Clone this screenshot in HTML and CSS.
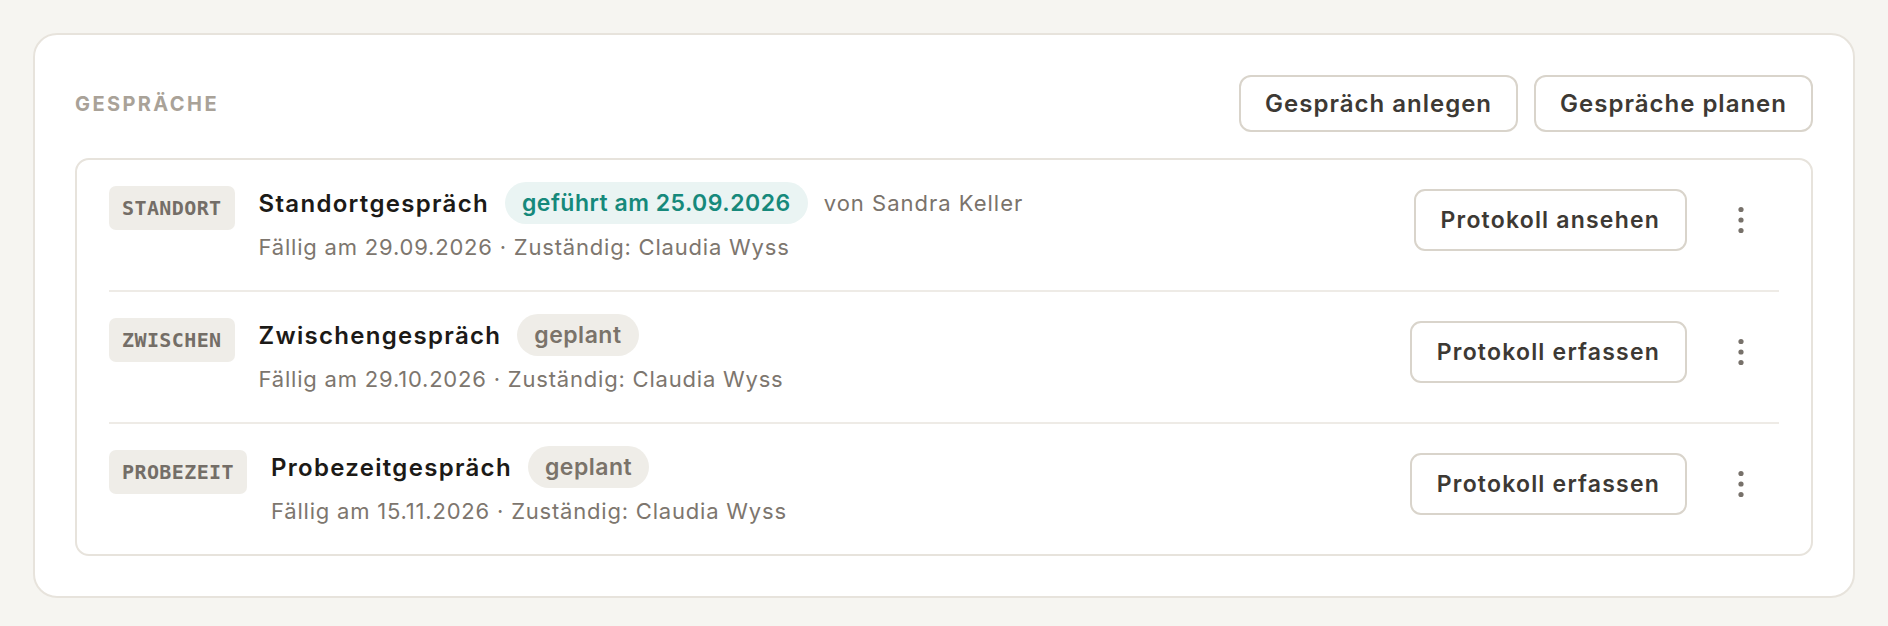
FILE: index.html
```html
<!DOCTYPE html>
<html lang="de">
<head>
<meta charset="utf-8">
<title>Gespräche</title>
<link rel="stylesheet" href="styles.css">
</head>
<body>
<section class="card">
  <header class="card-head">
    <h2 class="label">GESPRÄCHE</h2>
    <div class="head-actions">
      <button class="btn btn-head">Gespräch anlegen</button>
      <button class="btn btn-head">Gespräche planen</button>
    </div>
  </header>
  <div class="list">
    <div class="row">
      <div class="row-main">
        <span class="tag">STANDORT</span>
        <div class="info">
          <div class="title-line">
            <span class="title">Standortgespräch</span>
            <span class="pill pill-done">geführt am 25.09.2026</span>
            <span class="by">von Sandra Keller</span>
          </div>
          <div class="meta">Fällig am 29.09.2026 · Zuständig: Claudia Wyss</div>
        </div>
      </div>
      <div class="row-actions">
        <button class="btn btn-row">Protokoll ansehen</button>
        <button class="kebab" aria-label="Mehr"><svg width="6" height="28" viewBox="0 0 6 28"><circle cx="3" cy="3.5" r="2.6"/><circle cx="3" cy="14" r="2.6"/><circle cx="3" cy="24.5" r="2.6"/></svg></button>
      </div>
    </div>
    <div class="row">
      <div class="row-main">
        <span class="tag">ZWISCHEN</span>
        <div class="info">
          <div class="title-line">
            <span class="title">Zwischengespräch</span>
            <span class="pill pill-plan">geplant</span>
          </div>
          <div class="meta">Fällig am 29.10.2026 · Zuständig: Claudia Wyss</div>
        </div>
      </div>
      <div class="row-actions">
        <button class="btn btn-row">Protokoll erfassen</button>
        <button class="kebab" aria-label="Mehr"><svg width="6" height="28" viewBox="0 0 6 28"><circle cx="3" cy="3.5" r="2.6"/><circle cx="3" cy="14" r="2.6"/><circle cx="3" cy="24.5" r="2.6"/></svg></button>
      </div>
    </div>
    <div class="row">
      <div class="row-main">
        <span class="tag">PROBEZEIT</span>
        <div class="info">
          <div class="title-line">
            <span class="title">Probezeitgespräch</span>
            <span class="pill pill-plan">geplant</span>
          </div>
          <div class="meta">Fällig am 15.11.2026 · Zuständig: Claudia Wyss</div>
        </div>
      </div>
      <div class="row-actions">
        <button class="btn btn-row">Protokoll erfassen</button>
        <button class="kebab" aria-label="Mehr"><svg width="6" height="28" viewBox="0 0 6 28"><circle cx="3" cy="3.5" r="2.6"/><circle cx="3" cy="14" r="2.6"/><circle cx="3" cy="24.5" r="2.6"/></svg></button>
      </div>
    </div>
  </div>
</section>
</body>
</html>
```
FILE: styles.css
```css
* { box-sizing: border-box; }

html, body {
  margin: 0;
  background: #f6f5f1;
}

body {
  padding: 33px;
  font-family: Inter, "Noto Sans", "Liberation Sans", sans-serif;
  color: #1c1a17;
}

.card {
  background: #ffffff;
  border: 2px solid #e7e3dc;
  border-radius: 24px;
  padding: 40px;
}

.card-head {
  display: flex;
  align-items: center;
  justify-content: space-between;
  margin-bottom: 26px;
}

.label {
  margin: 0;
  font-size: 20px;
  font-weight: 700;
  letter-spacing: 0.12em;
  color: #a9a298;
}

.head-actions {
  display: flex;
  gap: 16px;
}

.btn {
  font-family: inherit;
  background: #ffffff;
  border: 2px solid #d9d4cb;
  color: #3d3934;
  font-weight: 600;
  cursor: pointer;
}

.btn-head {
  height: 57px;
  padding: 0 24px;
  border-radius: 12px;
  font-size: 24px;
  letter-spacing: 1px;
}

.list {
  border: 2px solid #e7e3dc;
  border-radius: 14px;
  padding: 0 32px;
}

.row {
  display: flex;
  align-items: flex-start;
  justify-content: space-between;
  padding: 22px 18px 28px 0;
  border-bottom: 2px solid #eeebe6;
}

.row:last-child {
  border-bottom: none;
}

.row-main {
  display: flex;
  align-items: flex-start;
  gap: 24px;
}

.tag {
  margin-top: 4px;
  height: 44px;
  padding: 0 13px;
  display: inline-flex;
  align-items: center;
  background: #efede8;
  border-radius: 7px;
  font-family: "DejaVu Sans Mono", "Liberation Mono", monospace;
  font-size: 20px;
  font-weight: 700;
  letter-spacing: 0.4px;
  color: #746e67;
}

.info {
  display: flex;
  flex-direction: column;
  gap: 8px;
}

.title-line {
  display: flex;
  align-items: center;
  gap: 16px;
  height: 42px;
}

.title {
  font-size: 24px;
  font-weight: 600;
  letter-spacing: 1.3px;
  color: #1c1a17;
}

.pill {
  height: 42px;
  padding: 0 17px;
  display: inline-flex;
  align-items: center;
  border-radius: 21px;
  font-size: 23px;
  font-weight: 600;
  letter-spacing: 0.5px;
}

.pill-done {
  background: #eaf4f3;
  color: #16897b;
}

.pill-plan {
  background: #efede8;
  color: #7a736a;
}

.by {
  font-size: 22px;
  letter-spacing: 1px;
  color: #7a736b;
}

.meta {
  font-size: 22px;
  letter-spacing: 0.8px;
  line-height: 30px;
  color: #7d766e;
}

.row-actions {
  display: flex;
  align-items: center;
  gap: 34px;
  margin-top: 7px;
}

.btn-row {
  height: 62px;
  padding: 0 25px;
  border-radius: 11px;
  font-size: 23px;
  letter-spacing: 1.2px;
}

.kebab {
  width: 40px;
  height: 40px;
  border: none;
  background: transparent;
  display: flex;
  align-items: center;
  justify-content: center;
  padding: 0;
  fill: #77716a;
  cursor: pointer;
}
```
